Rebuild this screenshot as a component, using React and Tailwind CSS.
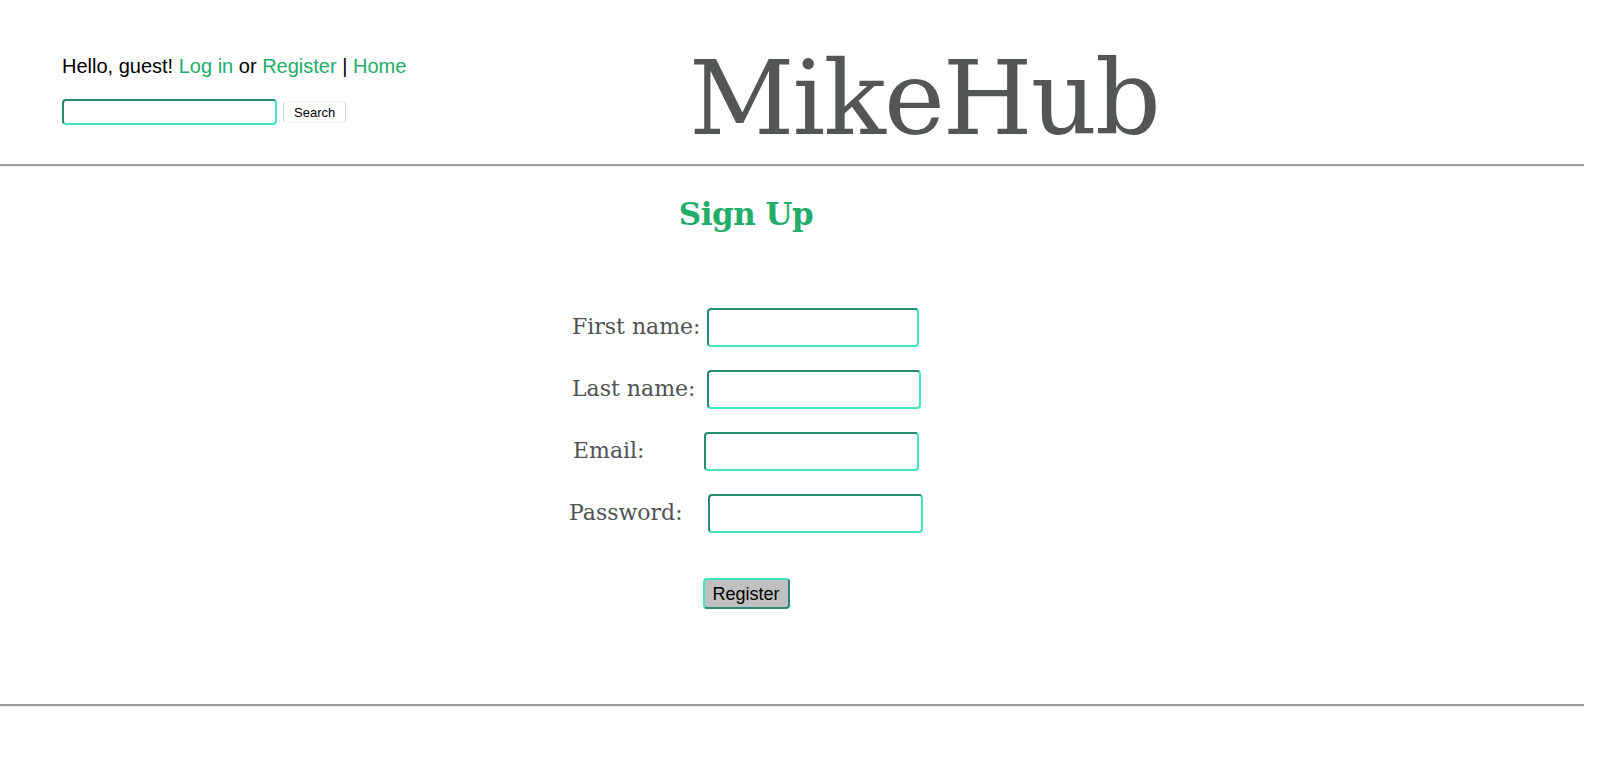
import React from 'react';

const FIELDS = [
  { id: 'first', label: 'First name:', rowClass: 'mt-0', labelClass: 'w-[138px] pl-[3px]', inputClass: 'w-[212px]' },
  { id: 'last', label: 'Last name:', rowClass: 'mt-[23px]', labelClass: 'w-[138px] pl-[3px]', inputClass: 'w-[214px]' },
  { id: 'email', label: 'Email:', rowClass: 'mt-[23px]', labelClass: 'w-[135px] pl-[4px]', inputClass: 'w-[215px]' },
  { id: 'password', label: 'Password:', rowClass: 'mt-[23px]', labelClass: 'w-[139px] pl-0', inputClass: 'w-[215px]' },
];

const slab = { fontFamily: '"DejaVu Serif", "Liberation Serif", serif' };
const sans = { fontFamily: '"Liberation Sans", Arial, sans-serif' };

export default function App() {
  return (
    <div className="w-[1584px] min-h-[760px] bg-white">
      {/* header */}
      <header className="flex items-start">
        <div className="w-[405px] shrink-0 pl-[62px] pt-[55px]" style={sans}>
          <p className="text-[20px] leading-[23px] text-black whitespace-nowrap">
            Hello, guest! <a className="text-[#22ad6a]">Log in</a> or{' '}
            <a className="text-[#22ad6a]">Register</a> | <a className="text-[#22ad6a]">Home</a>
          </p>
          <div className="mt-[21px] flex items-center gap-[6px]">
            <input
              type="text"
              className="w-[215px] h-[26px] rounded-[4px] border-2 border-t-[#268a74] border-l-[#268a74] border-b-[#3ee6bd] border-r-[#3ee6bd] outline-none px-1"
            />
            <button
              className="h-[22px] px-[10px] text-[13px] leading-none text-black bg-white rounded-[3px] border border-x-[#d2d2d2] border-y-[#f2f2f2]"
              style={sans}
            >
              Search
            </button>
          </div>
        </div>
        <h1
          className="flex-1 pr-[141px] pt-[47px] text-center text-[103px] leading-none tracking-[-2px] font-normal text-[#525657]"
          style={slab}
        >
          MikeHub
        </h1>
      </header>

      <hr className="mt-[14px] border-0 border-t-2 border-t-[#9a9a9a] border-b border-b-[#ededed]" />

      {/* sign up form */}
      <main className="flex flex-col items-center pr-[92px]">
        <h2 className="mt-[27px] text-[31px] leading-[40px] tracking-[-0.5px] font-bold text-[#22ad6a]" style={slab}>
          Sign Up
        </h2>

        <form className="mt-[74px] w-[354px] flex flex-col">
          {FIELDS.map(f => (
            <div key={f.id} className={`flex items-center h-[39px] ${f.rowClass}`}>
              <label
                htmlFor={f.id}
                className={`shrink-0 text-[22px] leading-[28px] pb-[2px] text-[#4f5354] whitespace-nowrap ${f.labelClass}`}
                style={slab}
              >
                {f.label}
              </label>
              <input
                id={f.id}
                type={f.id === 'password' ? 'password' : 'text'}
                className={`h-[39px] rounded-[4px] border-2 border-t-[#268a74] border-l-[#268a74] border-b-[#3ee6bd] border-r-[#3ee6bd] outline-none px-2 ${f.inputClass}`}
              />
            </div>
          ))}

          <div className="mt-[45px] flex justify-center">
            <button
              type="button"
              className="w-[87px] h-[31px] rounded-[4px] bg-[#c0c0c0] text-[18px] leading-none text-black border-2 border-t-[#3ee6bd] border-l-[#3ee6bd] border-b-[#268a74] border-r-[#268a74]"
              style={sans}
            >
              Register
            </button>
          </div>
        </form>
      </main>

      <hr className="mt-[95px] border-0 border-t-2 border-t-[#9a9a9a] border-b border-b-[#ededed]" />
    </div>
  );
}
